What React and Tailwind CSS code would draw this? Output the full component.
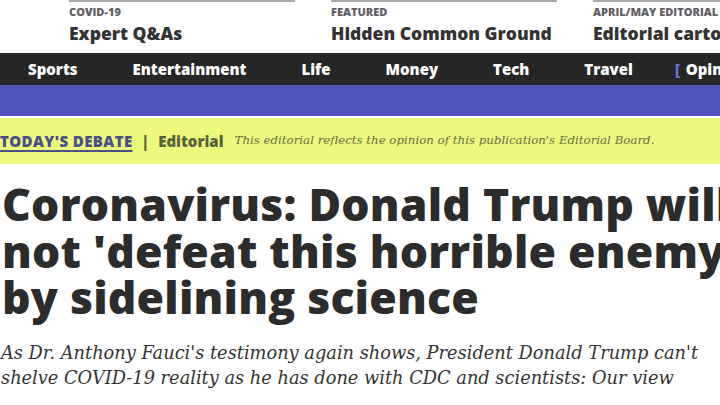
const cards = [
  { label: 'COVID-19', title: 'Expert Q&As' },
  { label: 'FEATURED', title: 'Hidden Common Ground' },
  { label: 'April/May editorial', title: 'Editorial cartoons' },
]

const nav = ['Sports', 'Entertainment', 'Life', 'Money', 'Tech', 'Travel']

export default function App() {
  return (
    <div className="h-[405px] w-[720px] overflow-hidden bg-white font-['Open_Sans',sans-serif]">
      {/* related cards strip */}
      <div className="flex h-[53px] gap-[36px] pl-[69px] whitespace-nowrap">
        {cards.map((c) => (
          <div key={c.label} className="w-[226px] shrink-0 border-t-2 border-[#a9a9ad] pt-[3px]">
            <div className="text-[11px] font-extrabold uppercase leading-[14px] text-[#5f5f64]">
              {c.label}
            </div>
            <div className="mt-[4px] text-[17.5px] font-extrabold leading-[20px] text-[#333]">
              {c.title}
            </div>
          </div>
        ))}
      </div>

      {/* section nav */}
      <div className="flex h-[32px] items-center bg-[#262626] pl-[28px] text-[15px] font-extrabold text-white whitespace-nowrap">
        {nav.map((n) => (
          <span key={n} className="mr-[55px]">
            {n}
          </span>
        ))}
        <span className="-ml-[13px] text-[#6d71d6]">[</span>
        <span className="ml-[6px]">Opinion</span>
      </div>

      <div className="h-[31px] bg-[#4f53bb]" />
      <div className="h-[2px] bg-white" />

      {/* debate bar */}
      <div className="flex h-[46px] items-center bg-[#ecf97c] whitespace-nowrap">
        <span className="text-[15px] font-extrabold tracking-[0.4px] text-[#4a4e86] underline decoration-[2px] underline-offset-[3px]">
          TODAY&apos;S DEBATE
        </span>
        <span className="mx-[9px] text-[15px] font-extrabold text-[#5a5f3c]">|</span>
        <span className="text-[15px] font-extrabold text-[#5a5f3c]">Editorial</span>
        <span className="ml-[11px] font-['DejaVu_Serif',serif] text-[11.8px] italic text-[#6a6e45]">
          This editorial reflects the opinion of this publication&apos;s Editorial Board.
        </span>
      </div>

      {/* headline */}
      <h1 className="mt-[17px] pl-[2px] text-[44.5px] font-extrabold leading-[46.5px] tracking-[0.2px] text-[#2c2c2c] whitespace-nowrap">
        Coronavirus: Donald Trump will
        <br />
        not &apos;defeat this horrible enemy&apos;
        <br />
        by sidelining science
      </h1>

      <p className="mt-[19px] pl-[1px] font-['DejaVu_Serif',serif] text-[17.8px] italic leading-[25px] text-[#333] whitespace-nowrap">
        As Dr. Anthony Fauci&apos;s testimony again shows, President Donald Trump can&apos;t
        <br />
        shelve COVID-19 reality as he has done with CDC and scientists: Our view
      </p>
    </div>
  )
}
